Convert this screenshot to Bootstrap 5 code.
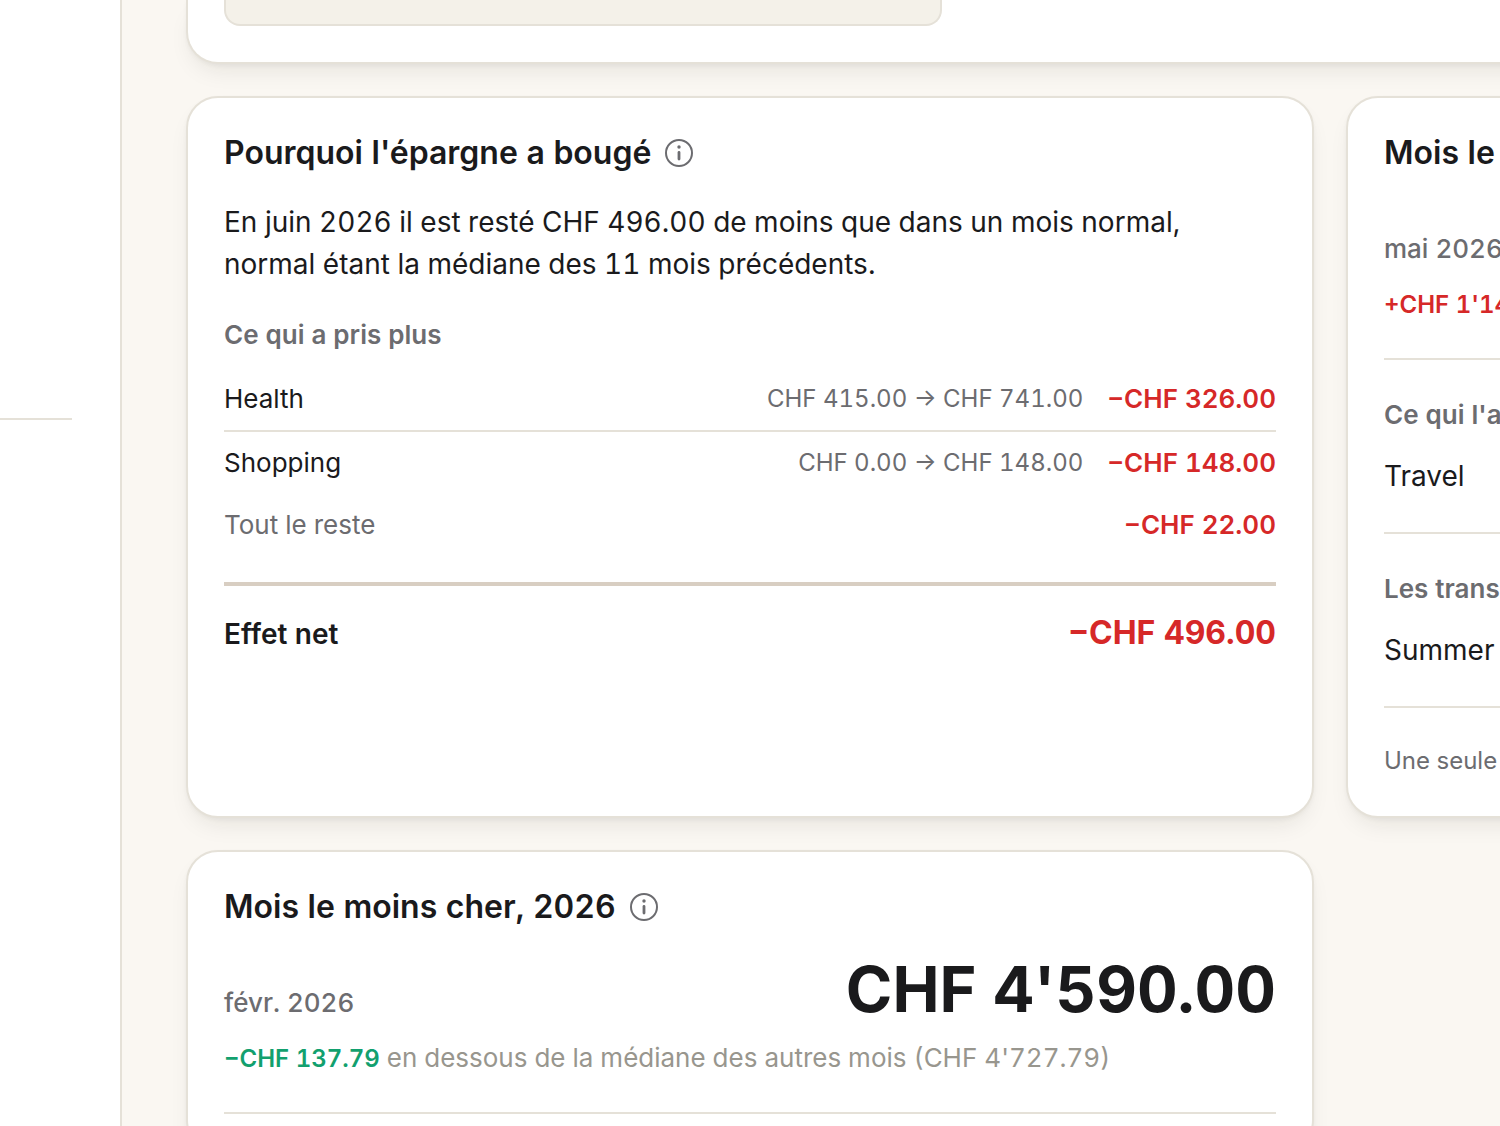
<!DOCTYPE html>
<html lang="fr">
<head>
<meta charset="utf-8">
<meta name="viewport" content="width=device-width, initial-scale=1">
<title>Épargne</title>
<link href="https://cdn.jsdelivr.net/npm/bootstrap@5.3.0/dist/css/bootstrap.min.css" rel="stylesheet">
<style>
:root { --line: #e5e1d8; --line-strong: #d8cec2; --ink: #1a1a1c; --soft: #6c6c70; --faint: #98968e; --loss: #d62828; --gain: #12a06e; }
body { font-family: Inter, "Liberation Sans", sans-serif; background: #faf7f2; color: var(--ink); font-size: 26px; line-height: 38px; font-variant-numeric: tabular-nums; }
.side-panel { flex: 0 0 122px; border-right: 2px solid var(--line); padding-right: 48px; padding-top: 418px; }
.side-panel hr, .rule { border: 0; border-top: 2px solid var(--line); opacity: 1; margin: 0; }
.content-area { padding-left: 64px; }
/* the two-column board runs on past the right edge of the window */
.board { display: grid; grid-template-columns: repeat(2, minmax(0, 1fr)); gap: 32px; margin-right: -974px; }
.tile { background: #fff; border: 2px solid var(--line); border-radius: 32px; padding: 36px; box-shadow: 0 2px 4px rgba(26, 26, 20, .04), 0 12px 24px -8px rgba(26, 26, 20, .1); }
.tile-wide { grid-column: 1 / -1; border-top: 0; border-top-left-radius: 0; border-top-right-radius: 0; padding-top: 0; }
.inset-box { height: 26px; max-width: 718px; background: #f4f1e9; border: 2px solid var(--line); border-top: 0; border-radius: 0 0 16px 16px; }
.tile-head { gap: 14px; }
.tile-title { font-size: 32px; line-height: 38px; font-weight: 600; margin: 0; }
.info-btn { border: 0; background: none; padding: 0; color: var(--soft); }
.info-btn svg { display: block; width: 28px; height: 28px; }
.intro { font-size: 28px; line-height: 42px; margin: 29px 0 31px; }
.sub-title { font-size: 26px; line-height: 38px; font-weight: 600; color: var(--soft); margin: 0; }
.moves { width: 100%; border-collapse: separate; border-spacing: 0; margin-top: 14px; }
.moves th, .moves td { height: 62px; padding: 0; font-weight: 400; white-space: nowrap; }
.moves th { width: 100%; }
.moves .ruled > * { height: 64px; border-bottom: 2px solid var(--line); }
.moves .change { font-size: 24px; color: var(--soft); text-align: right; padding-right: 24px; }
.moves .amount { font-weight: 600; text-align: right; }
.net-row { border-top: 4px solid var(--line-strong); margin-top: 26px; padding-top: 28px; }
.net-label { font-size: 28px; font-weight: 600; }
.net-amount { font-size: 32px; font-weight: 700; }
.month { font-weight: 500; color: var(--soft); }
.big-amount { font-size: 63px; line-height: 76px; font-weight: 700; }
.big-row { margin-top: 25px; margin-bottom: 12px; }
.month-row { margin-top: 58px; margin-bottom: 18px; }
.note { font-size: 24px; }
.entry { font-size: 28px; margin: 23px 0 37px; }
.rule { margin-top: 34px; }
.entry + .rule { margin-top: 0; }
.rule + .sub-title { margin-top: 36px; }
.rule + .note { margin-top: 34px; }
.ink-soft { color: var(--soft); }
.ink-faint { color: var(--faint); }
.ink-loss { color: var(--loss); }
.ink-gain { color: var(--gain); }
</style>
</head>
<body>
<div class="d-flex vh-100 overflow-hidden">
  <aside class="side-panel bg-white"><hr></aside>
  <main class="content-area flex-grow-1">
    <div class="board">
      <section class="tile tile-wide"><div class="inset-box"></div></section>

      <section class="tile">
        <div class="tile-head d-flex align-items-center">
          <h2 class="tile-title">Pourquoi l'épargne a bougé</h2>
          <button type="button" class="info-btn" aria-label="Info"><svg viewBox="0 0 28 28" fill="none" stroke="currentColor"><circle cx="14" cy="14" r="13" stroke-width="2"/><path d="M14 13.5v6.5" stroke-width="2.8" stroke-linecap="round"/><circle cx="14" cy="8" r="1.7" fill="currentColor" stroke="none"/></svg></button>
        </div>
        <p class="intro">En juin 2026 il est resté CHF 496.00 de moins que dans un mois normal, normal étant la médiane des 11 mois précédents.</p>
        <h3 class="sub-title">Ce qui a pris plus</h3>
        <table class="moves">
          <tbody>
            <tr class="ruled"><th scope="row">Health</th><td class="change">CHF 415.00 → CHF 741.00</td><td class="amount ink-loss">−CHF 326.00</td></tr>
            <tr><th scope="row">Shopping</th><td class="change">CHF 0.00 → CHF 148.00</td><td class="amount ink-loss">−CHF 148.00</td></tr>
            <tr><th scope="row" class="ink-soft">Tout le reste</th><td class="change"></td><td class="amount ink-loss">−CHF 22.00</td></tr>
          </tbody>
        </table>
        <div class="net-row d-flex justify-content-between align-items-baseline">
          <span class="net-label">Effet net</span>
          <span class="net-amount ink-loss">−CHF 496.00</span>
        </div>
      </section>

      <section class="tile text-nowrap d-flex flex-column">
        <h2 class="tile-title">Mois le</h2>
        <div class="month-row month">mai 2026</div>
        <div class="note fw-semibold ink-loss">+CHF 1'14</div>
        <hr class="rule">
        <h3 class="sub-title">Ce qui l'a</h3>
        <div class="entry">Travel</div>
        <hr class="rule">
        <h3 class="sub-title">Les trans</h3>
        <div class="entry">Summer</div>
        <hr class="rule">
        <div class="note ink-soft">Une seule</div>
      </section>

      <section class="tile">
        <div class="tile-head d-flex align-items-center">
          <h2 class="tile-title">Mois le moins cher, 2026</h2>
          <button type="button" class="info-btn" aria-label="Info"><svg viewBox="0 0 28 28" fill="none" stroke="currentColor"><circle cx="14" cy="14" r="13" stroke-width="2"/><path d="M14 13.5v6.5" stroke-width="2.8" stroke-linecap="round"/><circle cx="14" cy="8" r="1.7" fill="currentColor" stroke="none"/></svg></button>
        </div>
        <div class="big-row d-flex justify-content-between align-items-baseline">
          <span class="month">févr. 2026</span>
          <span class="big-amount">CHF 4'590.00</span>
        </div>
        <div><span class="note fw-semibold ink-gain">−CHF 137.79</span> <span class="ink-faint">en dessous de la médiane des autres mois (CHF 4'727.79)</span></div>
        <hr class="rule">
      </section>
    </div>
  </main>
</div>
<script src="https://cdn.jsdelivr.net/npm/bootstrap@5.3.0/dist/js/bootstrap.bundle.min.js"></script>
</body>
</html>
